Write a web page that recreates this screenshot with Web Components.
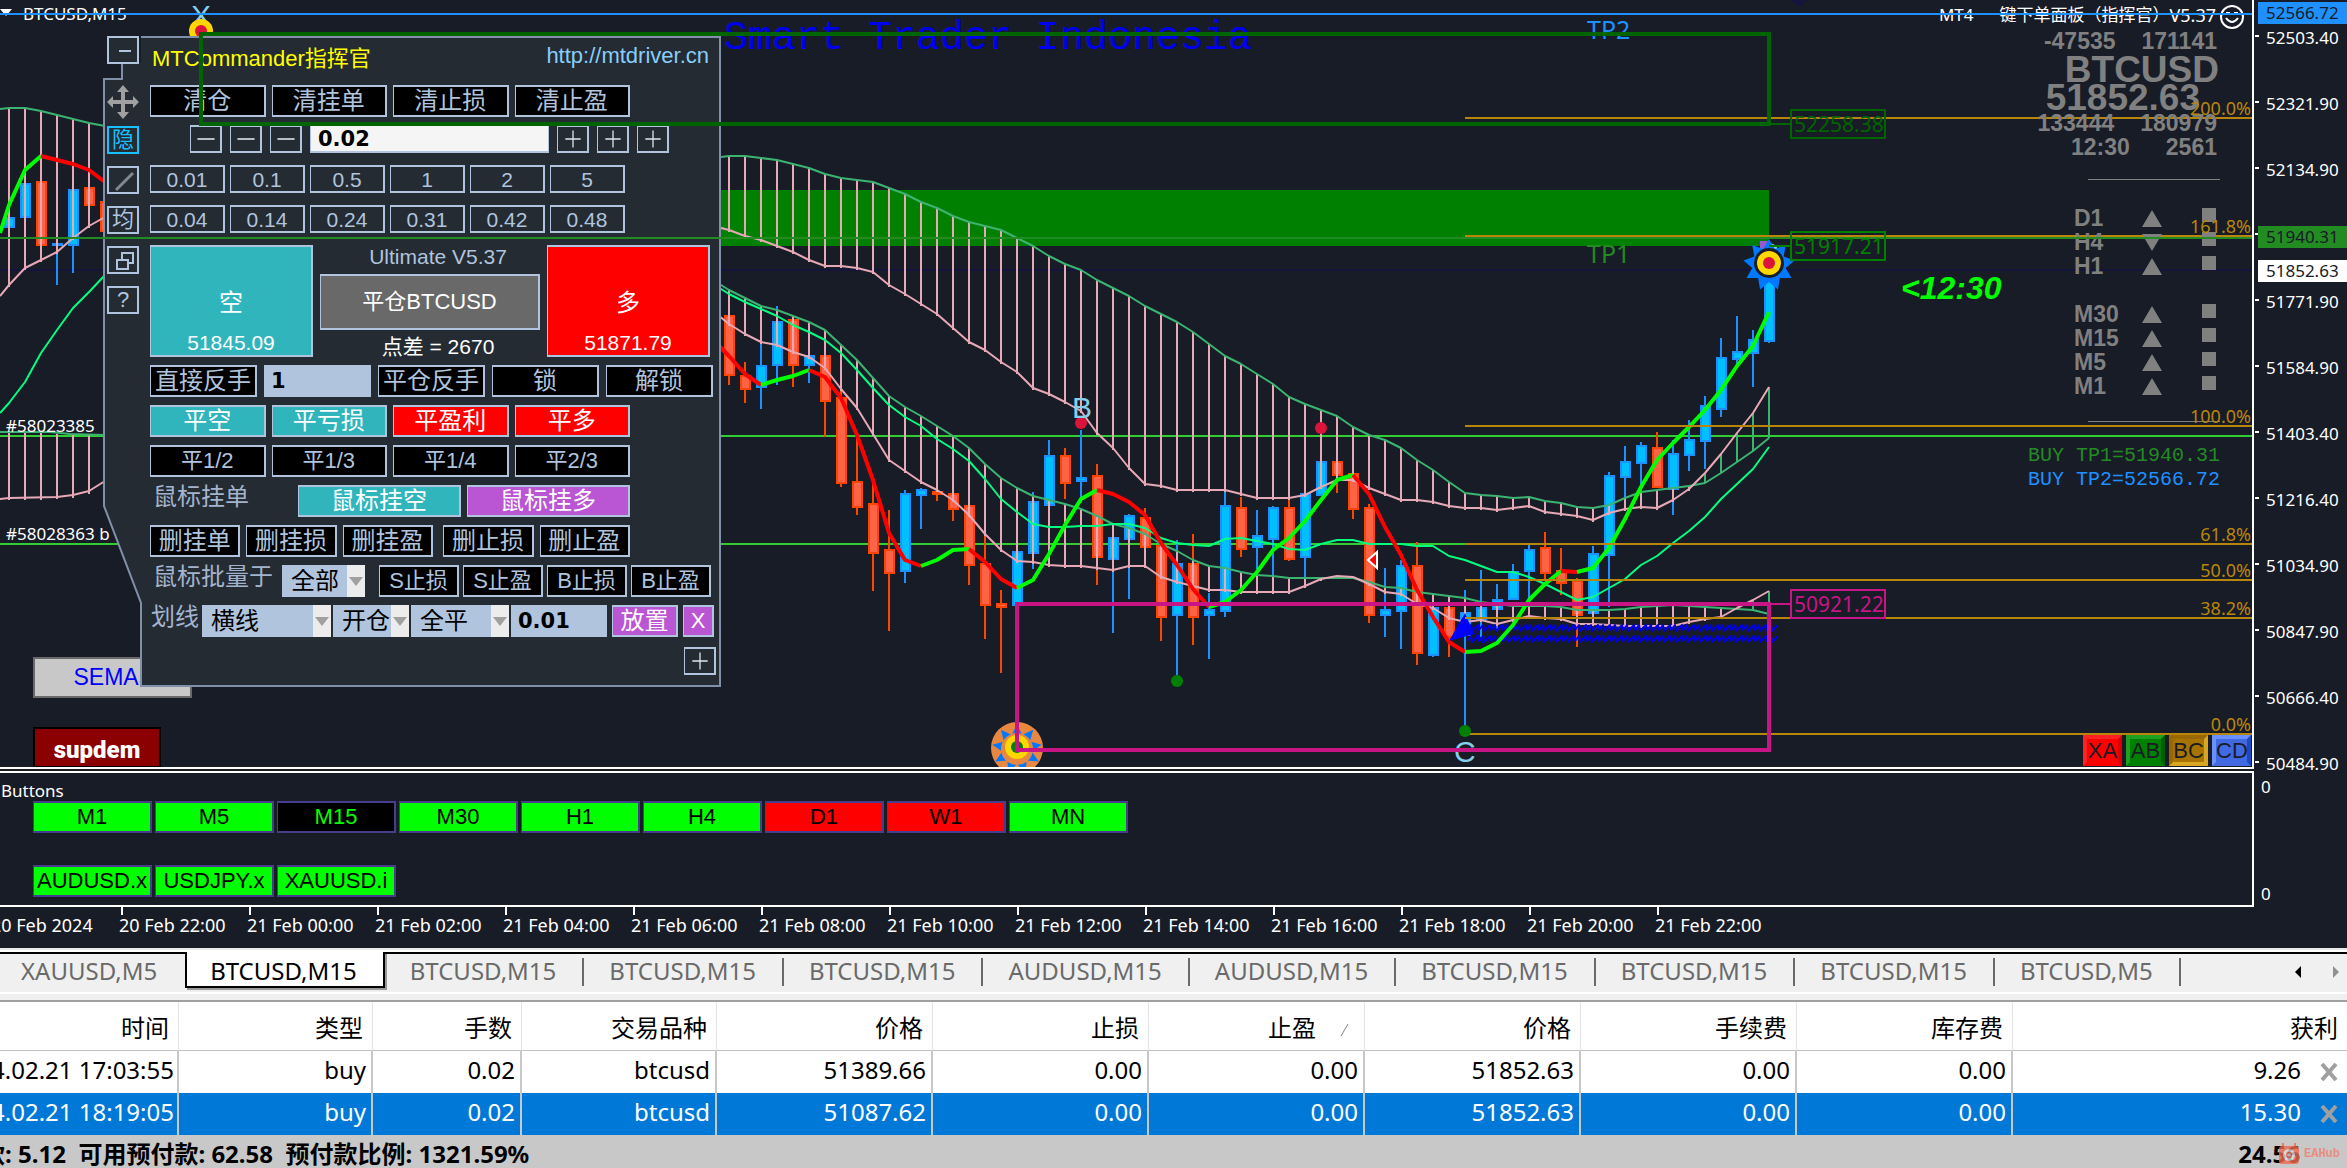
<!DOCTYPE html>
<html lang="zh-CN">
<head>
<meta charset="utf-8">
<title>BTCUSD,M15</title>
<style>
html,body{margin:0;padding:0;background:#181c27;}
body{font-family:"Noto Sans","Noto Sans CJK SC",sans-serif;overflow:hidden;}
</style>
</head>
<body>
<trading-terminal></trading-terminal>

<script>
const BG='#181c27';
const X0=729, STEP=16;
const px=k=>X0+STEP*k;

/* index, colour (u = up, d = down), high, open/close top, open/close bottom, low */
const CANDLES=[
[-45,'u',217,217,228,228],[-44,'u',183,183,218,218],[-43,'d',181,181,246,246],[-42,'u',243,243,246,285],[-41,'u',189,189,246,273],[-40,'d',187,187,206,206],[-39,'d',201,201,232,232],
[0,'d',315,315,376,385],[1,'d',362,375,390,403],[2,'u',344,365,388,409],[3,'u',306,321,366,385],[4,'d',319,319,366,387],[5,'u',355,355,366,383],[6,'d',355,355,402,437],[7,'d',390,397,484,487],[8,'d',438,481,508,515],[9,'d',480,503,554,591],[10,'d',510,549,574,631],[11,'u',490,493,572,583],[12,'u',488,489,496,529],[13,'d',491,491,495,501],[14,'d',493,493,510,521],[15,'d',505,505,566,585],[16,'d',530,563,606,639],[17,'d',590,603,608,673],[18,'u',551,551,606,606],[19,'u',492,501,554,569],[20,'u',440,455,506,506],[21,'d',448,455,484,499],[22,'u',430,477,482,503],[23,'d',464,475,558,585],[24,'u',537,537,560,633],[25,'u',514,515,540,599],[26,'d',508,517,548,548],[27,'d',545,545,618,641],[28,'u',540,563,616,675],[29,'d',534,563,618,645],[30,'u',593,609,616,659],[31,'u',492,505,612,617],[32,'d',497,507,550,557],[33,'u',510,535,548,569],[34,'u',506,507,540,575],[35,'d',500,507,560,561],[36,'u',493,493,558,577],[37,'u',461,461,496,496],[38,'d',461,461,476,493],[39,'d',473,473,510,519],[40,'d',504,507,616,623],[41,'u',568,609,616,637],[42,'u',560,565,612,649],[43,'d',542,565,654,665],[44,'u',607,607,656,657],[45,'d',607,607,638,657],[46,'u',590,612,636,727],[47,'u',570,607,620,637],[48,'u',584,599,610,631],[49,'u',564,571,600,600],[50,'u',545,549,572,607],[51,'d',532,547,574,580],[52,'d',548,570,584,595],[53,'d',578,580,616,647],[54,'u',546,553,614,614],[55,'u',472,475,556,607],[56,'u',446,461,478,500],[57,'u',442,445,464,493],[58,'d',432,447,488,488],[59,'u',440,453,490,515],[60,'u',420,439,456,471],[61,'u',396,405,442,469],[62,'u',338,357,410,417],[63,'u',316,351,360,365],[64,'u',330,339,354,387],[65,'u',275,275,342,343]];

const CLOUD_TOP=[156,156,158,160,164,168,174,178,180,182,188,194,202,208,216,222,226,230,238,246,256,264,270,280,288,296,306,314,322,332,344,356,364,374,384,397,404,410,416,427,435,440,448,460,470,482,493,495,496,498,497,501,503,507,508,505,498,492,490,488,486,483,473,462,451,438];
const CLOUD_LOW=[230,236,240,246,252,260,266,266,268,272,285,294,304,314,328,342,350,362,372,388,394,402,411,433,448,468,484,486,490,490,490,490,494,498,498,498,495,487,480,480,488,494,500,500,502,506,508,508,510,508,506,512,514,516,520,513,509,507,508,500,489,473,454,433,413,387];
const BAND_TOP=[290,298,306,310,316,322,330,345,360,378,396,407,416,426,436,448,464,478,488,496,500,504,509,516,524,528,534,544,551,560,566,568,572,575,576,578,578,578,578,578,582,587,588,592,594,596,598,602,604,606,606,606,607,610,610,610,609,607,606,605,606,607,608,609,610,614];
const BAND_LOW=[324,334,342,345,352,357,368,389,408,434,460,471,482,490,500,515,534,550,561,562,565,566,566,568,570,566,566,577,582,586,590,590,592,592,592,592,586,579,576,577,584,592,594,604,608,618,622,620,624,620,616,618,619,624,624,625,626,626,626,626,622,619,617,608,600,591];
const SPRING=[294,302,309,316,325,332,340,353,370,388,405,417,426,439,449,461,479,499,512,524,527,527,526,526,524,524,528,538,543,545,546,539,538,541,544,549,550,544,540,540,544,544,544,546,546,556,560,566,572,572,577,584,592,600,597,588,579,565,556,543,531,517,499,484,469,447];
const MA=[356,374,385,380,376,370,377,398,435,480,533,560,566,560,550,549,562,579,588,580,554,525,499,490,494,502,515,543,565,589,607,602,590,572,550,538,521,500,480,475,494,527,555,590,617,642,652,651,643,625,600,584,571,572,568,548,519,487,460,443,427,410,390,366,346,312];
/* runs of the moving average: first index, last index, colour */
const MA_RUNS=[[0,2,'r'],[2,5,'g'],[5,12,'r'],[12,15,'g'],[15,18,'r'],[18,23,'g'],[23,30,'r'],[30,39,'g'],[39,46,'r'],[46,52,'g'],[52,53,'r'],[53,65,'g']];
/* part of the history left of the order window, from index -45 */
const L_TOP=[108,108,111,115,119,123,126], L_LOW=[285,268,260,252,238,226,217];

const pts=(a,from=0)=>a.map((y,i)=>px(i+from)+','+y).join(' ');
const line=(p,c,w=2)=>`<polyline points="${p}" fill="none" stroke="${c}" stroke-width="${w}" stroke-linejoin="round"/>`;
const hline=(y,c,x=0,x2='100%',w=2)=>`<line x1="${x}" y1="${y}" x2="${x2}" y2="${y}" stroke="${c}" stroke-width="${w}"/>`;
const bars=(a,b,from=0)=>a.map((y,i)=>`<line x1="${px(i+from)}" x2="${px(i+from)}" y1="${y}" y2="${b[i]+(b[i]>y?2:0)}" stroke="${b[i]>y?'#e6a9b5':'#3cb371'}" stroke-width="2"/>`).join('');
const candle=([k,t,h,a,b,l])=>{const x=px(k),e=t=='u'?'#1e90ff':'#ff4500',f=t=='u'?'#00bfff':'#ff6347';
 return `<line x1="${x}" x2="${x}" y1="${h}" y2="${l}" stroke="${e}" stroke-width="2"/><rect x="${x-4}" y="${a+1}" width="9" height="${Math.max(1,b-a-2)}" fill="${f}" stroke="${e}" stroke-width="2"/>`;};
const star=(cx,cy,n,R,r)=>{let s='';for(let i=0;i<n*2;i++){const a=-Math.PI/2+i*Math.PI/n,q=i%2?r:R;s+=(cx+q*Math.cos(a)).toFixed(1)+','+(cy+q*Math.sin(a)).toFixed(1)+' ';}return s;};
const zig=y=>{let s='';for(let x=1467;x<1772;x+=12)s+=`${x},${y+2} ${x+4},${y-3} ${x+5},${y+3} ${x+11},${y-3} `;return s;};
const FIB=[[118,'200.0%'],[236,'161.8%'],[426,'100.0%'],[544,'61.8%'],[580,'50.0%'],[618,'38.2%'],[734,'0.0%']];

function sceneBack(){
 return `
 <rect x="201" y="190" width="1568" height="56" fill="#008000"/>
 ${hline(270,'#14143c')}${hline(436,'#32cd32')}${hline(544,'#32cd32')}
 ${CANDLES.map(candle).join('')}
 ${bars(L_TOP,L_LOW,-45)}${bars([433,433,433,434,434,434,435],[498,498,498,497,496,492,484],-45)}
 ${line('0,109 '+pts(L_TOP,-45),'#3cb371')}${line('0,296 '+pts(L_LOW,-45),'#e6a9b5')}
 ${line('0,432 50,432 70,434 105,435','#3cb371')}${line('0,499 9,498 57,497 73,495 89,491 105,481','#e6a9b5')}
 ${line('0,413 9,403 25,382 41,353 57,330 73,308 89,292 105,275','#00ff7f')}
 ${bars(CLOUD_TOP,CLOUD_LOW)}${bars(BAND_TOP,BAND_LOW)}
 ${line('713,158 '+pts(CLOUD_TOP),'#3cb371')}${line('713,226 '+pts(CLOUD_LOW),'#e6a9b5')}
 ${line('713,280 '+pts(BAND_TOP),'#3cb371')}${line('713,311 '+pts(BAND_LOW),'#e6a9b5')}
 ${line('713,284 '+pts(SPRING),'#00ff7f')}
 ${line('713,340 729,356','#ff0000',4)}
 ${line(zig(628),'#0000e6')}${line(zig(639),'#0000e6')}
 <path d="M1465 613L1474 634L1449 641Z" fill="#0000ff"/>
 <path d="M1468 627l16 17M1474 628l10 16" stroke="#0000e6"/>
 ${MA_RUNS.map(([a,b,c])=>line(pts(MA.slice(a,b+1),a),c=='r'?'#ff0000':'#00ff00',4)).join('')}
 ${line('0,233 9,205 25,170 41,156','#00ff00',4)}${line('41,156 57,160 73,164 89,170 105,182','#ff0000',4)}
 ${FIB.map(f=>hline(f[0],'#b8860b',1465)).join('')}
 <circle cx="1081" cy="423" r="6" fill="#dc143c"/><circle cx="1321" cy="428" r="6" fill="#dc143c"/>
 <circle cx="1177" cy="681" r="6" fill="#008000"/><circle cx="1465" cy="731" r="6" fill="#008000"/>
 <path d="M1377 552V568L1368 560Z" fill="#ff0000" stroke="#fff" stroke-width="2"/>
 <path d="M1790 0H1807L1799 7Z" fill="#14143c"/>
 <text x="1072" y="418" class="wave">B</text><text x="1454" y="762" class="wave">C</text><text x="191" y="26" class="wave">X</text><text x="1758" y="263" class="wave">D</text>
 <rect x="1760" y="241" width="7" height="10" fill="#9b59d0"/>
 <polygon points="${star(1769,265,9,26,17)}" fill="#0078ff"/><circle cx="1769" cy="263" r="15" fill="${BG}"/><circle cx="1769" cy="263" r="12" fill="#ffd700"/><circle cx="1769" cy="263" r="6" fill="#dc143c"/>
 <circle cx="201" cy="31" r="12" fill="#ffd700"/><circle cx="201" cy="31" r="6" fill="#dc143c"/>
 <circle cx="1017" cy="748" r="26" fill="#e8873f"/><polygon points="${star(1017,749,9,25,15)}" fill="#0078ff"/><circle cx="1017" cy="749" r="16" fill="#e8873f"/><circle cx="1017" cy="747" r="12" fill="#ffd700"/><circle cx="1017" cy="747" r="6" fill="#008000"/>
 <path d="M0 9H12L6 16Z" fill="#fff"/>
 <text x="23" y="20" class="lbl">BTCUSD,M15</text>
 <text x="6" y="432" class="lbl">#58023385</text><text x="6" y="540" class="lbl">#58028363 b</text>
 <text x="724" y="49" class="brand">Smart Trader Indonesia</text>
 <text x="1587" y="39" class="tp" fill="#1e90ff">TP2</text><text x="1587" y="263" class="tp" fill="#228b22">TP1</text>
 <text x="1901" y="299" class="count">&lt;12:30</text>`;
}
const tag=(y,t,c)=>`<path d="M1769 ${y+14}h22" stroke="${c}" stroke-width="2"/><rect x="1791" y="${y}" width="94" height="28" fill="none" stroke="${c}" stroke-width="2"/><text x="1794" y="${y+22}" class="tag" fill="${c}">${t}</text>`;
function sceneFront(){
 return `${hline(14,'#1e90ff')}${hline(238,'#228b22')}
 <rect x="201" y="34" width="1568" height="90" fill="none" stroke="#006400" stroke-width="4"/>
 <rect x="1017" y="604" width="752" height="146" fill="none" stroke="#c71585" stroke-width="4"/>
 ${tag(110,'52258.38','#006400')}${tag(232,'51917.21','#008000')}${tag(590,'50921.22','#c71585')}`;
}

function define(name,html){
 const t=document.createElement('template');t.innerHTML=html;
 customElements.define(name,class extends HTMLElement{
  constructor(){super();this.attachShadow({mode:'open'}).append(t.content.cloneNode(true));}
 });
}

/* Push button; the look comes from its tone attribute */
define('mt-button',`
<style>
:host{display:block;height:32px;min-width:0;--fill:#000;--ink:#b0c4de;--edge:#b0c4de;font-size:24px}
:host([tone=ghost]){--fill:transparent;height:28px;font-size:21px}
:host([tone=teal]){--fill:#30b5bc;--ink:#fff}
:host([tone=red]){--fill:#f00;--ink:#fff}
:host([tone=purple]){--fill:#ba55d3;--ink:#fff}
:host([tone=grey]){--fill:#696969;--ink:#fff}
:host([tone=lime]){--fill:#0f0;--ink:#000;--edge:#483d8b}
:host([tone=alert]){--fill:#f00;--ink:#000;--edge:#483d8b}
:host([tone=on]){--fill:#000;--ink:#0f0;--edge:#483d8b}
:host([mixed]){font-size:22px}
button{box-sizing:border-box;width:100%;height:100%;margin:0;padding:0;border:2px solid var(--edge);border-left-width:1px;background:var(--fill);color:var(--ink);font:inherit;line-height:1;white-space:nowrap;display:flex;flex-direction:column;align-items:center;justify-content:center;overflow:hidden;cursor:pointer}
</style><button type="button" part="button"><slot></slot></button>`);

/* Drop-down with a light arrow box */
customElements.define('mt-select',class extends HTMLElement{
 constructor(){super();
  this.attachShadow({mode:'open'}).innerHTML=`<style>
  :host{display:block;position:relative;height:32px;font-size:24px}
  select{appearance:none;box-sizing:border-box;width:100%;height:100%;border:0;border-radius:0;margin:0;padding:0 18px 0 9px;background:#b0c4de;color:#000;font:inherit;line-height:1}
  svg{position:absolute;right:0;top:0;pointer-events:none}
  </style><select aria-label="${this.getAttribute('label')}"><option>${this.getAttribute('value')}</option></select>
  <svg width="18" height="32"><rect width="18" height="32" fill="#ececec"/><path d="M2 12H16L9 21Z" fill="#a0a0a0"/></svg>`;}
});

const icon=(body,c='#b0c4de')=>`<svg width="32" height="28" viewBox="0 0 32 28" fill="none" stroke="${c}" stroke-width="2">${body}</svg>`;
const row=(c,inner)=>`<div class="row ${c}">${inner}</div>`;
const btns=(tone,list,extra='')=>list.map(t=>`<mt-button tone="${tone}" ${extra}>${t}</mt-button>`).join('');
define('command-panel',`
<style>
:host{display:block;width:618px;height:651px;font-family:"Liberation Sans","Noto Sans CJK SC",sans-serif;color:#b0c4de}
.shape{position:absolute;left:0;top:0}
.wrap{position:relative;display:flex;gap:11px;padding-left:4px}
.rail{display:flex;flex-direction:column;gap:12px;width:32px}
.rail button{display:grid;place-items:center;width:32px;height:28px;border:2px solid #b0c4de;background:#242b33;color:#b0c4de;padding:0;margin:0;font:22px "Liberation Sans","Noto Sans CJK SC",sans-serif;line-height:1;overflow:hidden}
.rail button.move{border:0;background:none;overflow:visible;height:36px;margin:8px 0 -6px}
.rail button.hide{border-color:#18c0ff;color:#18c0ff}
.body{flex:1;min-width:0;padding-right:4px}
.row{display:flex;gap:6px;height:40px;align-items:flex-start}
.title{height:49px;align-items:center;justify-content:space-between;font-size:22px;padding:0 8px 10px 2px;box-sizing:border-box}
.title span{color:#ff0}.title a{color:#87cefa;text-decoration:none}
.four{width:480px}.four mt-button,.six mt-button,.five mt-button{flex:1}
.lots{gap:8px;padding-left:40px}
.lots mt-button{width:32px}.lots input{width:239px}
.six{gap:5px;width:475px}
input{box-sizing:border-box;border:0;border-radius:0;margin:0;height:32px;background:#b0c4de;color:#000;font:bold 21px "DejaVu Sans",sans-serif;padding:0 7px}
.lots input{background:#f5f5f5;height:28px;border:1px solid #b0c4de;border-bottom-width:2px}
.trade{height:120px;gap:7px}
.trade>mt-button{width:163px;height:112px;font-size:24px}
.big{display:flex;flex-direction:column;align-items:center;height:112px;box-sizing:border-box;padding-top:44px;gap:17px}
.big b{font:21px "Liberation Sans",sans-serif;line-height:22px}
.mid{width:220px;display:flex;flex-direction:column;align-items:center;gap:5px;font-size:21px;line-height:24px}
.mid>span,.mid em{padding-left:16px}
.mid mt-button{width:100%;height:56px}
.mid em{font-style:normal;color:#fff}
.rev{gap:7px}.rev>*{width:107px}
.five{width:480px}
.five mt-button:nth-child(4){margin-left:4px}
.lab{font-size:24px;line-height:24px;white-space:nowrap;padding-left:3px;color:#a3b4cc}
.end{height:28px;justify-content:flex-end;padding:2px 1px 0 0}
.end mt-button{width:32px}
.mouse .lab{width:139px}.mouse mt-button{width:163px}
.batch{width:561px;gap:4px}.batch .lab{width:125px}.batch mt-select{width:83px;margin-right:10px}.batch mt-button{flex:1}
.draw{gap:2px}.draw .lab{padding-left:1px;width:49px}.draw input{width:96px;margin-right:3px}
</style>
<svg class="shape" width="618" height="651"><path d="M38 1H617V650H38V567L1 470V43H19V26H38Z" fill="#242b33"/><path d="M19 27V43H1V470L38 567V650H617V1H38" fill="none" stroke="#8090a8" stroke-width="2"/></svg>
<div class="wrap">
 <div class="rail">
  <button aria-label="minimise">${icon('<path d="M10 13H22"/>')}</button>
  <button class="move" aria-label="move"><svg width="32" height="36" viewBox="0 0 32 36"><path d="M16 1L22 8H18V16H26V12L32 18L26 24V20H18V28H22L16 35L10 28H14V20H6V24L0 18L6 12V16H14V8H10Z" fill="#a0a0a0"/></svg></button>
  <button class="hide">隐</button>
  <button aria-label="line">${icon('<path d="M7 22L24 5" stroke="#808890" stroke-width="3"/>')}</button>
  <button>均</button>
  <button aria-label="windows">${icon('<path d="M13 12V5H24V15H19M8 12H19V21H8Z"/>')}</button>
  <button>?</button>
 </div>
 <div class="body">
  ${row('title','<span>MTCommander指挥官</span><a href="#">http://mtdriver.cn</a>')}
  ${row('four',btns('black',['清仓','清挂单','清止损','清止盈']))}
  ${row('lots',btns('ghost',[1,2,3].map(()=>icon('<path d="M6 14H26" stroke="#d0d8e0"/>')))+'<input value="0.02" aria-label="lots">'+btns('ghost',[1,2,3].map(()=>icon('<path d="M7 14H25M16 4V24" stroke="#e0e6ee" stroke-width="1.5"/>'))))}
  ${row('six',btns('ghost',['0.01','0.1','0.5','1','2','5']))}
  ${row('six',btns('ghost',['0.04','0.14','0.24','0.31','0.42','0.48']))}
  ${row('trade','<mt-button tone="teal"><span class="big">空<b>51845.09</b></span></mt-button><div class="mid"><span>Ultimate V5.37</span><mt-button tone="grey" mixed>平仓BTCUSD</mt-button><em>点差 = 2670</em></div><mt-button tone="red"><span class="big">多<b>51871.79</b></span></mt-button>')}
  ${row('rev','<mt-button>直接反手</mt-button><input value="1" aria-label="multiplier"><mt-button>平仓反手</mt-button><mt-button>锁</mt-button><mt-button>解锁</mt-button>')}
  ${row('four',btns('teal',['平空','平亏损'])+btns('red',['平盈利','平多']))}
  ${row('four',btns('black',['平1/2','平1/3','平1/4','平2/3'],'mixed'))}
  ${row('mouse','<span class="lab">鼠标挂单</span><mt-button tone="teal">鼠标挂空</mt-button><mt-button tone="purple">鼠标挂多</mt-button>')}
  ${row('five',btns('black',['删挂单','删挂损','删挂盈','删止损','删止盈']))}
  ${row('batch','<span class="lab">鼠标批量于</span><mt-select label="批量" value="全部"></mt-select>'+btns('black',['S止损','S止盈','B止损','B止盈'],'mixed'))}
  ${row('draw','<span class="lab">划线</span><mt-select style="width:129px" label="线型" value="横线"></mt-select><mt-select style="width:76px" label="动作" value="开仓"></mt-select><mt-select style="width:98px" label="范围" value="全平"></mt-select><input value="0.01" aria-label="size"><mt-button style="width:66px" tone="purple">放置</mt-button><mt-button style="width:31px;margin-left:3px" tone="purple" mixed>X</mt-button>')}
  ${row('end','<mt-button tone="ghost">'+icon('<path d="M7 14H25M16 4V24" stroke="#e0e6ee" stroke-width="1.5"/>')+'</mt-button>')}
 </div>
</div>`);

const trend=(n,up)=>`<div class="tf"><span>${n}</span><svg width="20" height="17"><path d="${up?'M10 0L20 17H0Z':'M0 0H20L10 17Z'}" fill="#808080"/></svg><svg width="14" height="14"><rect width="14" height="14" fill="#808080"/></svg></div>`;
define('market-info',`
<style>
:host{display:block;width:330px;color:#808080;font:bold 23px "Liberation Sans",sans-serif;text-align:right}
.head{display:flex;justify-content:flex-end;align-items:center;gap:4px;height:28px;color:#fff;font:18px "Noto Sans","Noto Sans CJK SC",sans-serif;line-height:28px;white-space:nowrap}
.head i{font-style:normal;margin-right:22px;font-size:17px}
.head .cn{font-size:17px;margin-right:-4px}
.head svg{margin-top:3px}
.num{display:flex;justify-content:flex-end;line-height:24px;padding-right:27px;gap:26px}
.sym{font-size:37px;line-height:28px;padding-right:25px;margin-top:3px}
.last{padding-right:44px;line-height:26px;margin-top:1px}
hr{width:132px;border:0;border-top:1px solid #808080;margin:20px 24px 25px auto}
.tf{display:grid;grid-template-columns:68px 60px 14px;align-items:center;height:24px;margin-left:160px;text-align:left}
.tf svg:last-child{margin-top:-7px}
.space{height:24px}
.low{margin-top:24px;margin-bottom:22px}
.tp{font:20px "Liberation Mono",monospace;line-height:24px;padding-right:24px;white-space:pre}
</style>
<div class="head"><i>MT4</i><span class="cn">键下单面板（指挥官）</span><span>V5.37</span><svg width="24" height="24" viewBox="0 0 24 24" fill="none" stroke="#fff" stroke-width="2"><circle cx="12" cy="12" r="11"/><path d="M6 13Q12 21 18 13M6 8h4M14 8h4"/></svg></div>
<div class="num"><span>-47535</span><span>171141</span></div>
<div class="sym">BTCUSD</div><div class="sym last">51852.63</div>
<div class="num"><span>133444</span><span>180979</span></div>
<div class="num"><span style="margin-right:10px">12:30</span><span>2561</span></div>
<hr>
${trend('D1',1)}${trend('H4',0)}${trend('H1',1)}<div class="space"></div>${trend('M30',1)}${trend('M15',1)}${trend('M5',1)}${trend('M1',1)}
<hr class="low">
<div class="tp" style="color:#228b22">BUY TP1=51940.31</div><div class="tp" style="color:#1e90ff">BUY TP2=52566.72</div>`);

const SVGCSS=`
svg.scene{position:absolute;left:0;top:0;width:100%;height:767px;display:block;pointer-events:none}
.lbl{font:17px "Noto Sans",sans-serif;fill:#fff}.wave{font:30px "Liberation Sans",sans-serif;fill:#87ceeb}
.brand{font:40px "Liberation Mono",monospace;fill:#0000f0}.tp{font:25px "Noto Sans",sans-serif}
.tag{font:21px "Noto Sans",sans-serif}.count{font:italic bold 32px "Liberation Sans",sans-serif;fill:#0f0}`;
define('price-chart',`
<style>
:host{display:block;position:relative;height:767px;overflow:hidden;background:${BG}}
${SVGCSS}
command-panel{position:absolute;left:103px;top:36px}
market-info{position:absolute;right:8px;top:1px}
.fib{position:absolute;right:1px;color:#b8860b;font-size:18px;line-height:20px}
.legs{position:absolute;right:1px;bottom:1px;display:flex;gap:4px}
.legs button{width:39px;height:31px;padding:0;border:4px solid;font:22px "Liberation Sans",sans-serif;line-height:1;color:${BG};display:grid;place-items:center}
.sema,.supdem{position:absolute;left:33px;border:2px solid #696969;padding:0;box-sizing:border-box}
.sema{top:657px;width:159px;height:41px;background:#c8c8c8;color:#00f;font:23px "Liberation Sans",sans-serif}
.supdem{top:727px;width:128px;height:41px;background:#8b0000;border-color:#000;color:#fff;font:900 24px Roboto,sans-serif;padding-top:4px}
</style>
<svg class="scene">${sceneBack()}</svg>
<button class="sema" type="button">SEMA5</button><button class="supdem" type="button">supdem</button>
<market-info></market-info>
<command-panel></command-panel>
<svg class="scene">${sceneFront()}</svg>
${FIB.map(f=>`<span class="fib" style="top:${f[0]-20}px">${f[1]}</span>`).join('')}
<div class="legs"><button style="background:#f00;border-color:#f22 #d00 #f00 #f22">XA</button><button style="background:#008000;border-color:#20a020 #006000 #008000 #20a020">AB</button><button style="background:#a87400;border-color:#9a6800 #daa520 #daa520 #9a6800">BC</button><button style="background:#4169e1;border-color:#6a90ff #2048c0 #4169e1 #6a90ff">CD</button></div>`);

define('price-axis',`
<style>
:host{display:block;position:relative;width:93px;height:0;color:#fff;font-size:17px}
ol{list-style:none;margin:0;padding:5px 0 0;display:flex;flex-direction:column}
li{height:66px;line-height:66px;display:flex;align-items:center;gap:7px}
li::before{content:"";width:4px;height:2px;background:#fff;margin:-4px 0 0 1px}
b{position:absolute;left:4px;right:0;height:22px;line-height:22px;padding-left:8px;font-weight:400;color:${BG}}
</style>
<ol>${['52503.40','52321.90','52134.90','51958.90','51771.90','51584.90','51403.40','51216.40','51034.90','50847.90','50666.40','50484.90'].map((p,i)=>`<li>${i==3?'':p}</li>`).join('')}</ol>
<b style="top:2px;background:#1e90ff">52566.72</b><b style="top:226px;background:#228b22">51940.31</b><b style="top:260px;background:#fff">51852.63</b>`);

define('indicator-pane',`
<style>
:host{display:block;height:132px;font-size:17px;color:#fff;background:${BG}}
span{display:block;line-height:20px;padding:8px 0 1px 1px}
div{display:flex;gap:3px;padding-left:33px;font-family:"Liberation Sans",sans-serif}
mt-button{width:119px;height:32px;font-size:22px}
.tf{margin:-1px 0 32px}
</style>
<span>Buttons</span>
<div class="tf">${btns('lime',['M1','M5'])}${btns('on',['M15'])}${btns('lime',['M30','H1','H4'])}${btns('alert',['D1','W1'])}${btns('lime',['MN'])}</div>
<div>${btns('lime',['AUDUSD.x','USDJPY.x','XAUUSD.i'])}</div>`);

define('time-axis',`
<style>
:host{display:flex;height:41px;color:#fff;font-size:18px;line-height:20px;white-space:nowrap;background:${BG};overflow:hidden}
span{flex:none;width:128px}span:first-of-type{margin-left:-9px}
span::before{content:"";display:block;width:2px;height:8px;background:#fff;margin-left:2px}
</style>${['20 Feb 2024','20 Feb 22:00',...['00','02','04','06','08','10','12','14','16','18','20','22'].map(h=>`21 Feb ${h}:00`)].map(t=>`<span>${t}</span>`).join('')}`);

define('chart-tabs',`
<style>
:host{display:block;border-top:2px solid #e8e8e8;background:#fff;font-size:24px}
nav{display:flex;height:38px;margin-top:2px;border-top:2px solid #000;background:#f0f0f0}
a{color:#6a6a6a;text-decoration:none;line-height:34px;padding:0 28px 0 25px;position:relative}
a:first-child{padding-left:21px}
a:not(.on)::after{content:"";position:absolute;right:0;top:4px;width:2px;height:28px;background:#6a6a6a}
a:first-child::after{display:none}
a.on{background:#fff;color:#000;border:2px solid #000;border-top:0;margin-top:-2px;height:34px;line-height:38px;box-shadow:2px 2px #999;padding:0 26px 0 23px}
div{margin-left:auto;display:flex;gap:29px;padding:0 7px 2px 0;align-items:center}
hr{height:6px;margin:2px 0 0;border:0;border-bottom:2px solid #a0a0a0;background:#f0f0f0}
</style>
<nav>${['XAUUSD,M5','BTCUSD,M15','BTCUSD,M15','BTCUSD,M15','BTCUSD,M15','AUDUSD,M15','AUDUSD,M15','BTCUSD,M15','BTCUSD,M15','BTCUSD,M15','BTCUSD,M5'].map((t,i)=>`<a href="#"${i==1?' class="on"':''}>${t}</a>`).join('')}<div><svg width="12" height="14"><path d="M10 1V13L4 7Z"/></svg><svg width="8" height="14"><path d="M1 1V13L7 7Z" fill="#909090"/></svg></div></nav><hr>`);

const HEAD=['时间','类型','手数','交易品种','价格','止损','止盈','价格','手续费','库存费','获利'];
const ROWS=[['2024.02.21 17:03:55','buy','0.02','btcusd','51389.66','0.00','0.00','51852.63','0.00','0.00','9.26'],['2024.02.21 18:19:05','buy','0.02','btcusd','51087.62','0.00','0.00','51852.63','0.00','0.00','15.30']];
const WID=[179,194,149,195,216,216,216,216,216,216,0];
const cross='<svg width="18" height="18" viewBox="0 0 18 18"><path d="M2 1L16 17M16 1L2 17" stroke="#a0a0a0" stroke-width="4"/></svg>';
define('order-table',`
<style>
:host{display:block;background:#fff;font-size:24px;color:#000}
table{width:100%;border-collapse:separate;border-spacing:0;table-layout:fixed}
th,td{padding:0 5px 0 0;text-align:right;font-weight:400;white-space:nowrap;overflow:hidden;box-sizing:border-box;border-right:2px solid #c8c8c8}
td:first-child{direction:rtl}td:first-child bdi{direction:ltr}
th{height:49px;padding-right:9px;border-right:1px solid #e4e4e4;border-bottom:1px solid #c0c0c0}
th svg{margin-left:23px;margin-right:4px}
td{height:42px;line-height:38px;vertical-align:top}
th:last-child,td:last-child{border-right:0}
td:last-child{padding-right:9px}td svg{margin-left:19px;vertical-align:-2px}
tr.on td{background:#0078d7;color:#fff}
</style>
<table><colgroup>${WID.map(w=>`<col${w?` style="width:${w}px"`:''}>`).join('')}</colgroup>
<thead><tr>${HEAD.map((h,i)=>`<th>${h}${i==6?'<svg width="12" height="14"><path d="M2 13L9 1" stroke="#808080"/></svg>':''}</th>`).join('')}</tr></thead>
<tbody>${ROWS.map((r,j)=>`<tr${j?' class="on"':''}>${r.map((c,i)=>`<td>${i?c:`<bdi>${c}</bdi>`}${i==10?cross:''}</td>`).join('')}</tr>`).join('')}</tbody></table>`);

define('account-bar',`
<style>
:host{display:flex;justify-content:space-between;height:34px;line-height:38px;background:#c8c8c8;font-size:24px;font-weight:700;color:#000;padding-right:47px;position:relative;white-space:pre;overflow:hidden}
.sum{margin-left:-19px}
.mark{position:absolute;right:7px;top:8px;display:flex;align-items:center;gap:4px;opacity:.8;color:#f08070;font:bold 12px "Liberation Mono",monospace}
</style>
<span class="sum">款: 5.12  可用预付款: 62.58  预付款比例: 1321.59%</span><span>24.56</span>
<span class="mark"><svg width="22" height="22" viewBox="0 0 22 22"><rect x="1" y="3" width="20" height="18" rx="3" fill="#f06a50"/><path d="M5 3V0M17 3V0" stroke="#f06a50" stroke-width="2"/><circle cx="11" cy="12" r="6" fill="#ddd"/><circle cx="11" cy="12" r="2.5" fill="none" stroke="#f06a50" stroke-width="1.5"/></svg>EAHub</span>`);

define('trading-terminal',`
<style>
:host{display:block;background:${BG};font-family:"Noto Sans","Noto Sans CJK SC",sans-serif}
.pane{display:flex}
.plot{flex:1;min-width:0;border-right:2px solid #fff;border-bottom:2px solid #fff}
.sub{margin-top:2px}.sub .plot{border-top:2px solid #fff}
.scale{width:93px;color:#fff;font-size:17px;line-height:20px;display:flex;flex-direction:column;justify-content:space-between;box-sizing:border-box;padding:6px 0 3px 7px}
</style>
<div class="pane"><div class="plot"><price-chart></price-chart></div><price-axis></price-axis></div>
<div class="pane sub"><div class="plot"><indicator-pane></indicator-pane></div><div class="scale"><span>0</span><span>0</span></div></div>
<time-axis></time-axis>
<chart-tabs></chart-tabs>
<order-table></order-table>
<account-bar></account-bar>`);
</script>
</body>
</html>
